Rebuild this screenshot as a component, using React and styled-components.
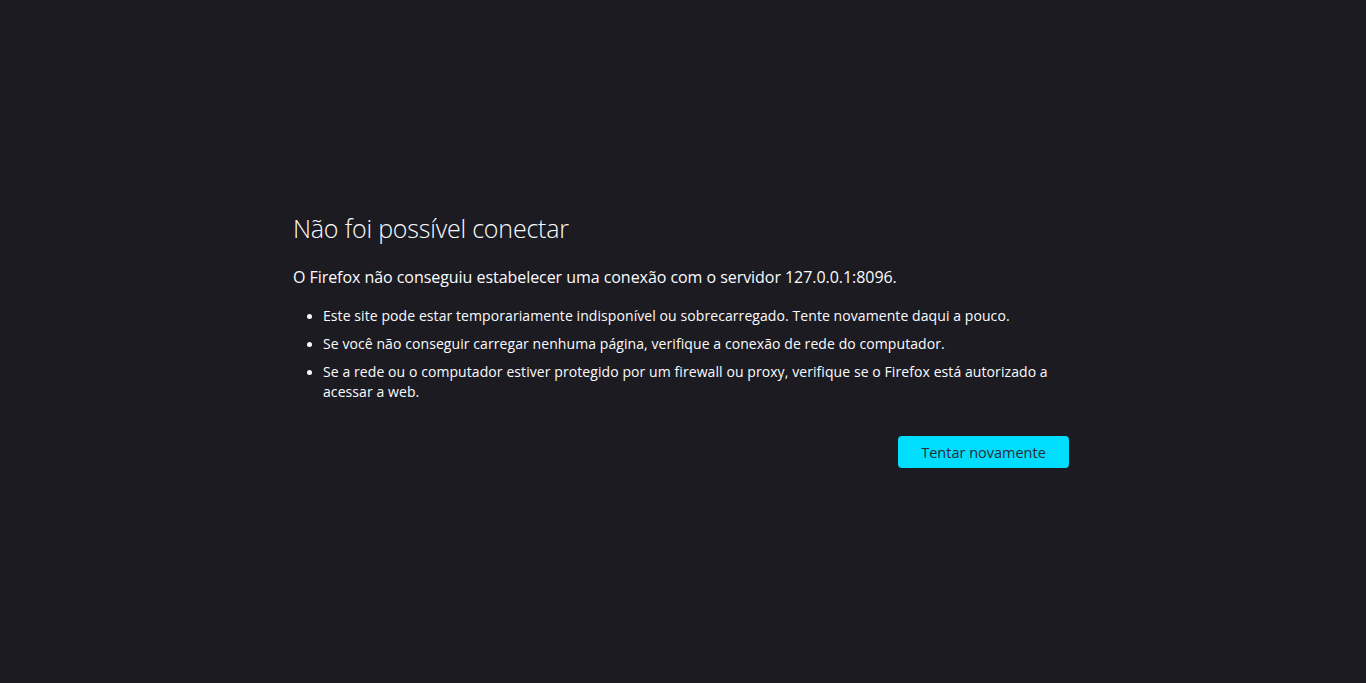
import React from 'react';
import styled, { createGlobalStyle } from 'styled-components';

const GlobalStyle = createGlobalStyle`
  html, body {
    margin: 0;
    padding: 0;
    height: 100%;
    background: #1c1b22;
  }
  #root {
    height: 100%;
  }
`;

const Page = styled.div`
  min-height: 683px;
  display: flex;
  align-items: center;
  justify-content: center;
  padding: 0 4px 5px 0;
  box-sizing: border-box;
  background: #1c1b22;
  color: #fbfbfe;
  font-family: "Open Sans", "Noto Sans", sans-serif;
`;

const Container = styled.div`
  width: 776px;
`;

const Title = styled.h1`
  margin: 0 0 20px;
  font-size: 25px;
  font-weight: 300;
  line-height: 36px;
  letter-spacing: -0.2px;
`;

const Lead = styled.p`
  margin: 0 0 18px;
  font-size: 16px;
  line-height: 22px;
  letter-spacing: -0.05px;
`;

const List = styled.ul`
  margin: 0;
  padding-left: 30px;
  font-size: 14px;
  line-height: 20px;
  letter-spacing: 0.08px;
`;

const Item = styled.li`
  margin-bottom: 8px;
  &::marker {
    font-size: 13px;
  }
`;

const Actions = styled.div`
  display: flex;
  justify-content: flex-end;
  margin-top: 34px;
`;

const RetryButton = styled.button`
  height: 32px;
  width: 171px;
  border: none;
  border-radius: 4px;
  background: #00ddff;
  color: #2b2a33;
  font-family: inherit;
  font-size: 14.5px;
  cursor: pointer;
  &:hover {
    background: #80ebff;
  }
`;

const reasons = [
  'Este site pode estar temporariamente indisponível ou sobrecarregado. Tente novamente daqui a pouco.',
  'Se você não conseguir carregar nenhuma página, verifique a conexão de rede do computador.',
  'Se a rede ou o computador estiver protegido por um firewall ou proxy, verifique se o Firefox está autorizado a acessar a web.',
];

export default function App() {
  return (
    <>
      <GlobalStyle />
      <Page>
        <Container>
          <Title>Não foi possível conectar</Title>
          <Lead>O Firefox não conseguiu estabelecer uma conexão com o servidor 127.0.0.1:8096.</Lead>
          <List>
            {reasons.map((text, i) => (
              <Item key={i}>{text}</Item>
            ))}
          </List>
          <Actions>
            <RetryButton>Tentar novamente</RetryButton>
          </Actions>
        </Container>
      </Page>
    </>
  );
}
